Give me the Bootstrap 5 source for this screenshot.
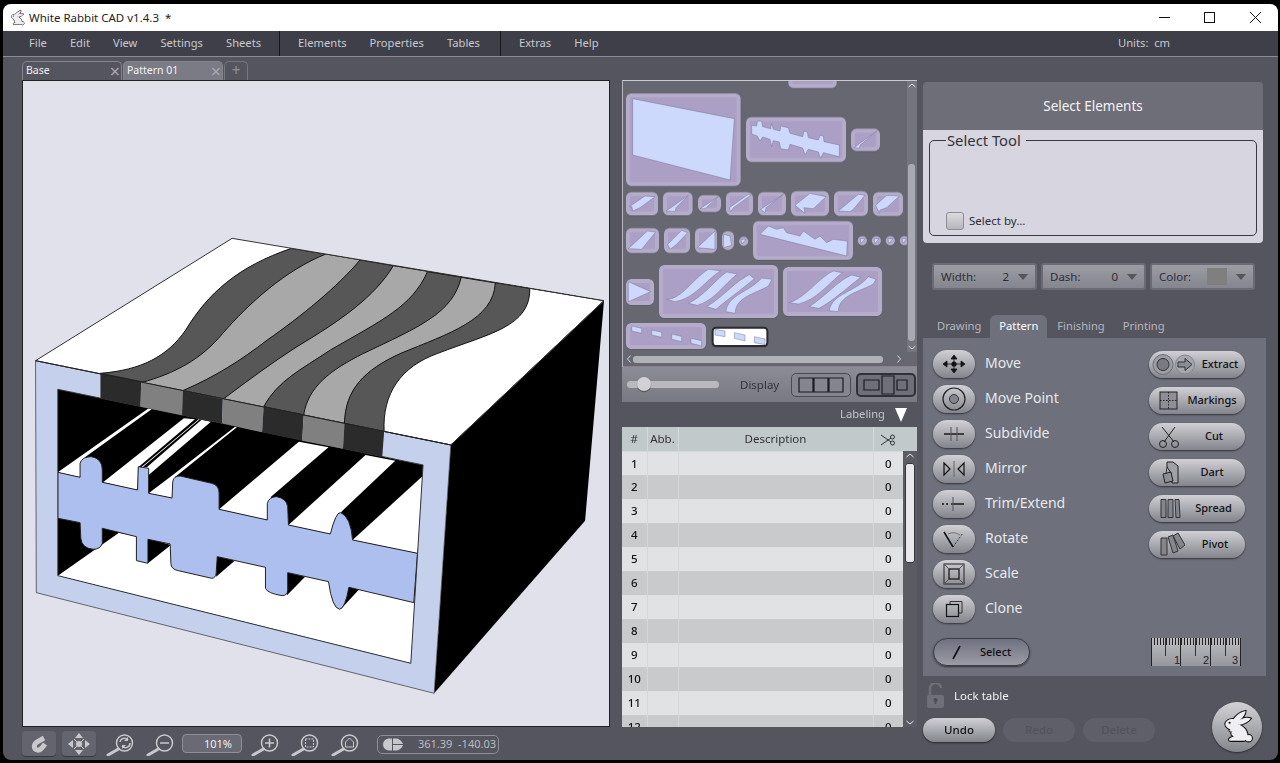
<!DOCTYPE html>
<html lang="en">
<head>
<meta charset="UTF-8" />
<title>White Rabbit CAD</title>
<link rel="stylesheet" href="https://cdn.jsdelivr.net/npm/bootstrap@5.3.3/dist/css/bootstrap.min.css" />
<script src="https://cdn.jsdelivr.net/npm/bootstrap@5.3.3/dist/js/bootstrap.bundle.min.js"></script>
<style>
html, body { height: 763px; overflow: hidden; background: #000; }
body { font-family: "Noto Sans", "Open Sans", sans-serif; font-size: 12px; }
.rb-window { height: 763px; padding: 4px 2px 3px 3px; }
.rb-inner { height: 756px; background: #55555f; border-radius: 8px 8px 8px 8px; overflow: hidden; }
.rb-title { height: 27px; background: #fff; color: #222; font-size: 11.5px; padding-left: 6px; }
.rb-winbtn { width: 45.5px; height: 27px; }
.rb-menu { height: 26px; background: #3f3f49; border-bottom: 1px solid #8b8b93; color: #c9c9cf; font-size: 11.2px; padding-left: 26px; }
.rb-menu span { margin-right: 23px; }
.rb-menu span.rb-end1 { margin-right: 18px; }
.rb-menu span.rb-end2 { margin-right: 20px; }
.rb-sep { width: 1px; height: 25px; background: #15151a; margin-right: 18px; }
.rb-units { position: absolute; left: 1115px; }
.rb-main { height: 703px; padding-left: 19px; }
.rb-left { width: 588px; }
.rb-doc-tabs { height: 23px; padding-top: 4px; }
.rb-doc-tab { width: 100px; height: 19px; margin-right: 1px; border: 1px solid #85858d; border-bottom: 0; border-radius: 5px 5px 0 0; background: #55555f; color: #f2f2f4; font-size: 10.5px; padding: 0 1px 0 3px; }
.rb-doc-tab.rb-on { background: #7b7b85; }
.rb-doc-tab b { font-weight: 400; font-size: 18px; color: #a9a9b0; line-height: 1; }
.rb-doc-plus { width: 24px; height: 19px; border: 1px solid #77777f; border-bottom: 0; border-radius: 5px 5px 0 0; color: #8f8f97; font-size: 16px; line-height: 16px; }
.rb-canvas { width: 588px; height: 647px; background: #e0e1ea; border: 1px solid #222; display: block; }
.rb-bottom { height: 33px; padding-top: 4px; }
.rb-square { width: 34px; height: 25px; background: #64646e; border-radius: 4px; box-shadow: 0 1px 1px rgba(0,0,0,.35); }
.rb-m2 { margin-left: 6px; }
.rb-mag { width: 28px; height: 25px; }
.rb-m3 { margin-left: 10px; }
.rb-m4 { margin-left: 12px; }
.rb-zoom { width: 60px; height: 19px; margin: 3px 0 0 8px; border: 1px solid #8e8e96; border-radius: 4px; background: #6a6a74; color: #f0f0f2; font-size: 11px; line-height: 17px; text-align: right; padding-right: 9px; }
.rb-m5 { margin-left: 9px; }
.rb-m6 { margin-left: 12px; }
.rb-coord { width: 122px; height: 19px; margin: 4px 0 0 18px; border: 1px solid #8e8e96; border-radius: 5px; color: #bcbcc2; font-size: 11px; padding: 0 2px 0 4px; }
.rb-mid { width: 295px; margin: 23px 0 0 12px; }
.rb-thumbs { height: 287px; background: #676771; border-top: 1px solid #c9c9cf; border-left: 1px solid #b5b5bb; }
.rb-view { width: 284px; height: 271px; display: block; }
.rb-vbar { width: 10px; background: #74747e; }
.rb-vthumb { width: 7px; height: 177px; margin: 75px 0 3px 1px; background: #a9a9b1; border-radius: 3px; }
.rb-hbar { height: 15px; border-bottom: 1px solid #8d7f8c; padding: 0 3px; }
.rb-hthumb { width: 250px; height: 7px; margin: 0 13px 0 1px; background: #b1b1b8; border-radius: 3px; }
.rb-display { height: 35px; background: linear-gradient(#8c8c96, #797983); color: #33333a; font-size: 11.5px; padding-left: 5px; }
.rb-track { width: 92px; height: 7px; background: #b9b9bf; border-radius: 4px; position: relative; flex-shrink: 0; }
.rb-knob { position: absolute; left: 10px; top: -4px; width: 14px; height: 14px; border-radius: 50%; background: #d2d2d6; box-shadow: 0 1px 1px rgba(0,0,0,.4); }
.rb-dlabel { margin-left: 21px; margin-right: 12px; width: 39px; white-space: nowrap; }
.rb-disp { width: 60px; height: 24px; border: 1px solid #4a4a54; border-radius: 5px; background: #85858f; flex-shrink: 0; }
.rb-disp.rb-on { border: 2px solid #30303a; background: #6f6f79; margin-left: 5px; }
.rb-label { height: 25px; background: #55555f; color: #c4c4ca; font-size: 11.2px; padding-right: 10px; }
.rb-tri { width: 0; height: 0; margin-left: 10px; border-left: 6px solid transparent; border-right: 6px solid transparent; border-top: 14px solid #fff; }
.rb-tablewrap { height: 300px; overflow: hidden; }
.rb-table { width: 281px; table-layout: fixed; margin: 0; font-size: 11.5px; font-weight: 500; color: #111; }
.rb-table th, .rb-table td { padding: 0; text-align: center; vertical-align: middle; border: 0; border-left: 1px solid #d5d7d9; }
.rb-table th:first-child, .rb-table td:first-child { border-left: 0; }
.rb-table th { height: 24px; background: #c1c9cb; font-weight: 400; color: #333; border-bottom: 1px solid #d5d7d9; }
.rb-table td { height: 24px; }
.rb-table tbody tr:nth-child(odd) td { background: #e0e2e4; }
.rb-table tbody tr:nth-child(even) td { background: #c9cacc; }
.rb-tbar { width: 14px; background: #5b5b65; }
.rb-thead { height: 24px; background: #c1c9cb; }
.rb-tthumb { width: 10px; height: 100px; margin: 4px 0 0 2px; background: #e8e8ea; border: 1px solid #35353d; border-radius: 3px; }
.rb-right { width: 343px; margin-left: 6px; padding-top: 25px; }
.rb-rhead { width: 340px; height: 48px; background: #6e6e79; border-radius: 4px 4px 0 0; color: #f4f4f6; font-size: 13.5px; }
.rb-rbody { width: 340px; height: 113px; background: #d7d5df; border-radius: 0 0 4px 4px; padding: 1px 6px 0; }
.rb-field { height: 103px; border: 1px solid #3a3a44; border-radius: 5px; padding: 0 0 0 16px; margin: 0; position: relative; top: 2px; }
.rb-field legend { float: none; width: auto; font-size: 14.8px; line-height: 14px; margin: 0; padding: 0 5px 0 1px; color: #33333b; }
.rb-check { width: 18px; height: 18px; border: 1px solid #8c8c94; border-radius: 3px; background: linear-gradient(#dcdce0, #b5b5bc); }
.rb-selby { margin-top: 65px; color: #2c2c34; font-size: 11.5px; gap: 5px; }
.rb-drops { height: 27px; margin: 20px 0 0 9px; gap: 4px; }
.rb-drop { width: 105px; height: 27px; border: 2px solid #6b6b75; border-radius: 3px; background: linear-gradient(#9c9ca5, #85858f); color: #2e2e36; font-size: 11.5px; padding: 0 7px; }
.rb-caret { width: 0; height: 0; border-left: 5px solid transparent; border-right: 5px solid transparent; border-top: 6px solid #55555d; margin-left: 9px; }
.rb-swatch { width: 20px; height: 17px; background: #7f7f7f; margin-left: auto; }
.rb-tabs { height: 23px; margin-top: 25px; padding-left: 14px; color: #b6b6bd; font-size: 11.2px; }
.rb-tabs span { margin-right: 18px; line-height: 21px; }
.rb-tabs .rb-on { background: #6e707b; color: #fff; border-radius: 6px 6px 0 0; margin: 0 10px 0 -9px; padding: 0 9px; line-height: 21px; height: 23px; }
.rb-panel { height: 338px; background: #6e707b; padding: 12px 21px 10px 10px; }
.rb-leftcol { gap: 7px; }
.rb-rightcol { gap: 9px; margin-top: 1px; }
.rb-tool { height: 28px; gap: 10px; color: #e8e8ee; font-size: 14px; }
.rb-tool span { position: relative; top: -2px; }
.rb-pill { border: 0; padding: 0; background: linear-gradient(#d0d0d5, #84848d); box-shadow: 0 1px 2px rgba(0,0,0,.55); border-radius: 14px; color: #111; font-size: 11px; font-weight: 500; }
.rb-pill:hover { background: linear-gradient(#d0d0d5, #84848d); color: #111; }
.rb-toolpill { width: 42px; height: 28px; }
.rb-select { width: 97px; height: 28px; margin-top: 8px; background: linear-gradient(#6f7180, #9b9ca6); border: 1px solid #3d3d47; }
.rb-wide { width: 96px; height: 27px; }
.rb-wide span { flex-grow: 1; text-align: center; }
.rb-ruler { display: block; margin-right: 4px; }
.rb-foot { height: 84px; }
.rb-lock { height: 26px; margin: 7px 0 9px 3px; color: #f2f2f4; font-size: 11.5px; gap: 8px; }
.rb-act { width: 72px; height: 24px; margin-right: 8px; padding: 0; font-size: 11.5px; font-weight: 500; border-radius: 12px; border: 0; }
.rb-act.rb-off { background: #666670; color: #52525c; box-shadow: none; }
.rb-bunny { width: 50px; height: 50px; border-radius: 50%; margin: 26px 4px 0 0; background: linear-gradient(#d2d2d6, #85858e); box-shadow: 0 1px 2px rgba(0,0,0,.5); }
.rb-tile { fill: #ab9fc6; stroke: #b5accb; stroke-width: 12; }
.rb-piece { fill: #ccd8fc; stroke: #7a7794; stroke-width: 1.5; }
.rb-thumbset { filter: drop-shadow(0 1px 1px rgba(30,30,40,.35)); }
</style>
</head>
<body>
<div class="rb-window">
<div class="rb-inner position-relative">

  <div class="rb-title d-flex align-items-center">
    <svg width="16" height="20" viewBox="0 0 32 32" class="me-1"><use href="#rabbit" /></svg>
    <span>White Rabbit CAD v1.4.3 &nbsp;*</span>
    <div class="ms-auto d-flex">
      <div class="rb-winbtn d-flex align-items-center justify-content-center"><svg width="11" height="11"><path d="M0 5.5H11" stroke="#111" /></svg></div>
      <div class="rb-winbtn d-flex align-items-center justify-content-center"><svg width="11" height="11"><rect x=".5" y=".5" width="10" height="10" fill="none" stroke="#111" /></svg></div>
      <div class="rb-winbtn d-flex align-items-center justify-content-center"><svg width="11" height="11"><path d="M0 0L11 11M11 0L0 11" stroke="#111" /></svg></div>
    </div>
  </div>

  <div class="rb-menu d-flex align-items-center position-relative">
    <span>File</span><span>Edit</span><span>View</span><span>Settings</span><span class="rb-end1">Sheets</span>
    <div class="rb-sep"></div>
    <span>Elements</span><span>Properties</span><span class="rb-end2">Tables</span>
    <div class="rb-sep"></div>
    <span>Extras</span><span>Help</span>
    <span class="rb-units">Units: &nbsp;cm</span>
  </div>

  <div class="rb-main d-flex">
    <div class="rb-left">
      <div class="rb-doc-tabs d-flex">
        <div class="rb-doc-tab d-flex align-items-center justify-content-between"><span>Base</span><b>&#215;</b></div>
        <div class="rb-doc-tab rb-on d-flex align-items-center justify-content-between"><span>Pattern 01</span><b>&#215;</b></div>
        <div class="rb-doc-plus text-center">+</div>
      </div>

      <svg class="rb-canvas" viewBox="23 81 586 645">
        <defs>
          <clipPath id="topface"><path d="M545,25L1548,212L1135,645L15,392Z" /></clipPath>
          <clipPath id="hole"><path d="M75,478L1060,705L1027,1300L75,1037Z" /></clipPath>
        </defs>
        <g transform="translate(30 230) scale(.3708 .3333)">
          <path d="M1135,645L1548,212L1497,872L1090,1390Z" fill="#000" />
          <path d="M15,392L1135,645L1090,1390L17,1088Z" fill="#c5d0ec" stroke="#333" stroke-width="2" />
          <g clip-path="url(#hole)">
            <path d="M75,478L1060,705L1027,1300L75,1037Z" fill="#000" />
            <path d="M75,1037L240,908L1045,1100L1027,1300Z" fill="#fff" />
            <path d="M318,1000L380,945L318,925ZM502,1040L552,992L502,975ZM693,1096L742,1040L693,1025ZM838,1138L888,1078L858,1068Z" fill="#000" />
            <path d="M75,727L320,535L328,538L150,680L135,742Z" fill="#fff" />
            <path d="M197,757L415,565L445,568L292,712L290,780Z" fill="#fff" />
            <path d="M300,712L455,568L488,575L320,735Z" fill="#fff" />
            <path d="M305,710L458,568L462,570L315,712Z" fill="#000" />
            <path d="M320,790L385,735L553,590L558,592L392,740L383,804Z" fill="#fff" />
            <path d="M510,838L725,635L805,652L650,800L640,870Z" fill="#fff" />
            <path d="M697,885L905,675L985,692L840,845L810,912Z" fill="#fff" />
            <path d="M870,930L1062,735L1045,970Z" fill="#fff" />
            <path d="M75,727L135,742L135,700Q140,680 165,680Q195,685 195,720L195,757L290,780L292,710L320,715L320,790L383,804L385,755Q387,738 405,738L490,760Q510,765 510,790L510,838L640,870L640,820Q645,800 665,800Q692,805 695,830L697,885L810,912Q825,845 838,848Q865,860 870,930L1045,970L1035,1118L860,1072Q850,1135 835,1138Q815,1135 805,1055L695,1028L695,1080Q695,1097 680,1097Q640,1090 635,1075L635,1012L505,980L502,1030Q500,1045 490,1045L400,1022Q380,1018 380,1000L378,942L318,928L318,1000L287,992L287,920L195,895L195,940Q190,958 170,958Q140,955 137,925L135,878L75,865Z" fill="#adbfee" stroke="#222" stroke-width="1" vector-effect="non-scaling-stroke" />
          </g>
          <path d="M75,478L1060,705L1027,1300L75,1037Z" fill="none" stroke="#333" stroke-width="1" vector-effect="non-scaling-stroke" />
          <path d="M545,25L1548,212L1135,645L15,392Z" fill="#fff" />
          <g clip-path="url(#topface)" stroke="#111" stroke-width="1">
            <path vector-effect="non-scaling-stroke" fill="#575757" d="M190,430C300,420 370,380 420,300C480,190 560,110 705,55L1548,212L1135,645Z" />
            <path vector-effect="non-scaling-stroke" fill="#a8a8a8" d="M300,458C390,430 460,390 520,310C590,220 690,120 798,72L1548,212L1135,645Z" />
            <path vector-effect="non-scaling-stroke" fill="#575757" d="M412,482C500,440 570,390 640,330C730,260 830,170 890,90L1548,212L1135,645Z" />
            <path vector-effect="non-scaling-stroke" fill="#a8a8a8" d="M520,508C590,450 650,400 720,350C840,270 930,200 980,107L1548,212L1135,645Z" />
            <path vector-effect="non-scaling-stroke" fill="#575757" d="M630,530C670,450 730,420 810,360C950,270 1030,230 1072,125L1548,212L1135,645Z" />
            <path vector-effect="non-scaling-stroke" fill="#a8a8a8" d="M738,555C750,470 810,420 900,370C1050,290 1140,250 1163,142L1548,212L1135,645Z" />
            <path vector-effect="non-scaling-stroke" fill="#575757" d="M848,580C850,480 900,420 1000,370C1130,310 1250,270 1255,158L1548,212L1135,645Z" />
            <path vector-effect="non-scaling-stroke" fill="#fff" d="M955,605C950,490 1000,410 1100,370C1240,310 1350,290 1348,175L1548,212L1135,645Z" />
          </g>
          <path d="M545,25L1548,212L1135,645L15,392Z" fill="none" stroke="#333" stroke-width="1" vector-effect="non-scaling-stroke" />
          <path d="M190,430L300,456L298,530L190,505Z" fill="#2b2b2b" />
          <path d="M300,456L412,482L410,556L298,530Z" fill="#808080" />
          <path d="M412,482L520,508L518,580L410,556Z" fill="#2b2b2b" />
          <path d="M520,508L630,532L626,607L518,580Z" fill="#808080" />
          <path d="M630,532L738,556L734,632L626,607Z" fill="#2b2b2b" />
          <path d="M738,556L848,580L844,656L734,632Z" fill="#808080" />
          <path d="M848,580L955,605L950,680L844,656Z" fill="#2b2b2b" />
          <path d="M15,392L1135,645" fill="none" stroke="#222" stroke-width="1" vector-effect="non-scaling-stroke" />
        </g>
      </svg>

      <div class="rb-bottom d-flex">
        <div class="rb-square d-flex align-items-center justify-content-center">
          <svg width="24" height="22" viewBox="0 0 24 22"><path d="M17 5L10 9C6 12 7 16 10 17C13 18 15 15 18 11" fill="none" stroke="#c9c9cd" stroke-width="5" /></svg>
        </div>
        <div class="rb-square rb-m2 d-flex align-items-center justify-content-center">
          <svg width="24" height="24" viewBox="0 0 24 24" fill="#c9c9cd"><circle cx="12" cy="12" r="3" /><path d="M12 1L16 6H8ZM12 23L16 18H8ZM1 12L6 8V16ZM23 12L18 8V16Z" /><path d="M12 12L7 7M12 12L17 7M12 12L7 17M12 12L17 17" stroke="#c9c9cd" stroke-width="1" /></svg>
        </div>
        <svg class="rb-mag rb-m3" viewBox="0 0 28 25"><use href="#mag" /><path d="M14 11A4.5 4.5 0 0 1 22 9M24 12A4.5 4.5 0 0 1 16 15" fill="none" stroke="#c8c8cc" stroke-width="1.5" /><path d="M22 6V10H18ZM16 18V14H20Z" fill="#c8c8cc" /></svg>
        <svg class="rb-mag rb-m4" viewBox="0 0 28 25"><use href="#mag" /><path d="M14 12H23" stroke="#c8c8cc" stroke-width="1.6" /></svg>
        <div class="rb-zoom">101%</div>
        <svg class="rb-mag rb-m5" viewBox="0 0 28 25"><use href="#mag" /><path d="M14 12H23M18.5 7.5V16.5" stroke="#c8c8cc" stroke-width="1.6" /></svg>
        <svg class="rb-mag rb-m6" viewBox="0 0 28 25"><use href="#mag" /><rect x="14.5" y="8" width="8" height="8" fill="none" stroke="#c8c8cc" stroke-dasharray="2 1" /></svg>
        <svg class="rb-mag rb-m6" viewBox="0 0 28 25"><use href="#mag" /><path d="M14.5 16V11L18.5 7L22.5 11V16Z" fill="none" stroke="#c8c8cc" /></svg>
        <div class="rb-coord d-flex align-items-center justify-content-between">
          <svg width="22" height="13" viewBox="0 0 22 13"><path d="M10 0.5H7A6 6 0 0 0 7 12.5H10Z" fill="#c8c8cc" /><path d="M11 0.5H14C17 0.5 20 3 21 6H11ZM11 7H21C20 10 17 12.5 14 12.5H11Z" fill="#c8c8cc" /></svg>
          <span>361.39 &nbsp;-140.03</span>
        </div>
      </div>
    </div>

    <div class="rb-mid">
      <div class="rb-thumbs d-flex flex-column">
        <div class="d-flex">
          <svg class="rb-view" viewBox="9 15 852 813">
            <g class="rb-thumbset">
              <rect class="rb-tile" x="511" y="-20" width="133" height="50" rx="8" />
              <rect class="rb-tile" x="24" y="58" width="332" height="266" rx="10" />
              <rect class="rb-tile" x="384" y="129" width="288" height="123" rx="10" />
              <rect class="rb-tile" x="699" y="164" width="75" height="55" rx="10" />
              <rect class="rb-tile" x="24" y="354" width="84" height="58" rx="10" />
              <rect class="rb-tile" x="135" y="354" width="77" height="58" rx="10" />
              <rect class="rb-tile" x="240" y="363" width="57" height="39" rx="10" />
              <rect class="rb-tile" x="324" y="354" width="69" height="58" rx="10" />
              <rect class="rb-tile" x="420" y="354" width="72" height="58" rx="10" />
              <rect class="rb-tile" x="519" y="351" width="102" height="63" rx="10" />
              <rect class="rb-tile" x="648" y="351" width="90" height="63" rx="10" />
              <rect class="rb-tile" x="765" y="354" width="78" height="60" rx="10" />
              <rect class="rb-tile" x="24" y="462" width="87" height="63" rx="10" />
              <rect class="rb-tile" x="138" y="462" width="66" height="63" rx="10" />
              <rect class="rb-tile" x="231" y="462" width="54" height="63" rx="10" />
              <rect class="rb-tile" x="312" y="471" width="24" height="45" rx="10" />
              <rect class="rb-tile" x="405" y="441" width="288" height="105" rx="10" />
              <circle class="rb-tile" cx="371" cy="496" r="8" />
              <circle class="rb-tile" cx="727" cy="494" r="8" />
              <circle class="rb-tile" cx="769" cy="494" r="8" />
              <circle class="rb-tile" cx="811" cy="494" r="8" />
              <circle class="rb-tile" cx="853" cy="494" r="8" />
              <g transform="translate(0 552)">
                <rect class="rb-tile" x="24" y="63" width="72" height="66" rx="10" />
                <rect class="rb-tile" x="123" y="21" width="345" height="147" rx="10" />
                <rect class="rb-tile" x="495" y="27" width="285" height="135" rx="10" />
                <rect class="rb-tile" x="24" y="195" width="228" height="66" rx="10" />
                <rect x="278" y="203" width="164" height="55" rx="10" fill="#fff" stroke="#2a2a32" stroke-width="6" />
              </g>
            </g>
            <path class="rb-piece" d="M38,68L343,128L330,312L38,237Z" />
            <path class="rb-piece" d="M395,148L410,150L412,135L425,135L428,152L452,158L455,142L460,160L480,165L482,150L505,155L510,172L548,182L552,165L562,168L565,185L595,192L600,178L610,180L612,197L658,207L658,242L610,230L602,247L595,228L565,220L555,236L548,216L510,205L505,222L482,218L478,198L460,194L455,212L450,190L428,183L420,195L412,180L395,174Z" />
            <path class="rb-piece" d="M703,215L718,203L770,165L720,208L718,217Z" />
            <path class="rb-piece" d="M28,392L75,360L105,362L60,395L38,405L36,392Z" />
            <path class="rb-piece" d="M138,405L160,390L205,358L168,395L165,407Z" />
            <path class="rb-piece" d="M240,398L295,362L255,398Z" />
            <path class="rb-piece" d="M328,395L385,355L392,358L340,395L332,408Z" />
            <path class="rb-piece" d="M422,400L490,355L438,395L435,410Z" />
            <path class="rb-piece" d="M525,388L570,352L618,362L580,398L552,395L555,412Z" />
            <path class="rb-piece" d="M655,405L715,355L735,358L700,400L690,407Z" />
            <path class="rb-piece" d="M767,388L800,358L838,360L800,395L780,402L778,412Z" />
            <path class="rb-piece" d="M25,518L82,465L107,468L65,520Z" />
            <path class="rb-piece" d="M143,505L185,463L203,470L170,505L150,520Z" />
            <path class="rb-piece" d="M232,515L285,465L285,520Z" />
            <path class="rb-piece" d="M311,475L330,480L335,508L310,515Z" />
            <path class="rb-piece" d="M420,475L445,450L470,460L490,455L500,470L540,480L550,465L585,490L600,480L620,500L640,490L682,495L680,540Z" />
            <path class="rb-piece" d="M363,490L378,490L366,504ZM720,488L735,488L723,502ZM762,488L777,488L765,502ZM804,488L819,488L807,502ZM846,488L860,488L849,502Z" />
            <g transform="translate(0 552)">
              <path class="rb-piece" d="M25,65L92,95L25,125Z" />
              <path class="rb-piece" d="M140,118C185,118 215,60 265,28L302,32C255,62 225,115 165,125Z" />
              <path class="rb-piece" d="M205,130C250,110 285,60 320,36L352,42C310,75 285,120 232,136Z" />
              <path class="rb-piece" d="M260,140C310,110 345,65 388,44L403,56C370,85 320,120 288,148Z" />
              <path class="rb-piece" d="M318,155C322,105 390,95 425,54L456,58L445,78C410,100 345,110 346,160Z" />
              <path class="rb-piece" d="M508,128C555,115 600,50 640,33L667,38C625,70 590,120 535,132Z" />
              <path class="rb-piece" d="M568,140C620,105 660,58 695,45L722,52C680,85 635,125 597,145Z" />
              <path class="rb-piece" d="M628,152C635,100 710,95 745,50L768,58L760,72C720,95 655,105 655,155Z" />
              <path class="rb-piece" d="M35,198L65,205L65,220L35,213ZM95,210L125,217L125,232L95,225ZM155,222L185,229L185,245L155,238ZM213,235L245,242L245,258L213,250Z" />
              <path class="rb-piece" d="M285,208L315,213L315,230L285,225ZM343,218L375,225L375,243L343,235ZM403,230L435,237L435,254L403,248Z" />
            </g>
          </svg>
          <div class="rb-vbar">
            <svg width="10" height="8" class="d-block"><path d="M1.5 6L5 3L8.5 6" fill="none" stroke="#e4e4e8" /></svg>
            <div class="rb-vthumb"></div>
            <svg width="10" height="8" class="d-block"><path d="M1.5 2L5 5L8.5 2" fill="none" stroke="#d4d4d8" /></svg>
          </div>
        </div>
        <div class="rb-hbar d-flex align-items-center">
          <svg width="6" height="10"><path d="M4.5 1.5L1.5 5L4.5 8.5" fill="none" stroke="#d4d4d8" /></svg>
          <div class="rb-hthumb"></div>
          <svg width="6" height="10"><path d="M1.5 1.5L4.5 5L1.5 8.5" fill="none" stroke="#d4d4d8" /></svg>
        </div>
      </div>

      <div class="rb-display d-flex align-items-center">
        <div class="rb-track"><div class="rb-knob"></div></div>
        <span class="rb-dlabel">Display</span>
        <div class="rb-disp d-flex align-items-center justify-content-center">
          <svg width="46" height="16"><path d="M1 1H15V15H1ZM16 1H30V15H16ZM31 1H45V15H31Z" fill="none" stroke="#1c1c22" stroke-width="1.2" /></svg>
        </div>
        <div class="rb-disp rb-on d-flex align-items-center justify-content-center">
          <svg width="46" height="20"><path d="M1 6H16V16H1ZM19 2H31V20H19ZM34 6H44V16H34Z" transform="translate(0 -1)" fill="none" stroke="#1c1c22" stroke-width="1.2" /></svg>
        </div>
      </div>

      <div class="rb-label d-flex align-items-center justify-content-end">
        <span>Labeling</span><div class="rb-tri"></div>
      </div>

      <div class="rb-tablewrap d-flex">
        <table class="table rb-table">
          <colgroup><col style="width:25px" /><col style="width:31px" /><col /><col style="width:30px" /></colgroup>
          <thead><tr><th>#</th><th>Abb.</th><th>Description</th><th><svg width="14" height="12" viewBox="0 0 14 12"><path d="M0 1L10 8M0 11L10 4" stroke="#333" fill="none" /><circle cx="11.5" cy="9" r="2" fill="none" stroke="#333" /><circle cx="11.5" cy="3" r="2" fill="none" stroke="#333" /></svg></th></tr></thead>
          <tbody>
            <tr><td>1</td><td></td><td></td><td>0</td></tr>
            <tr><td>2</td><td></td><td></td><td>0</td></tr>
            <tr><td>3</td><td></td><td></td><td>0</td></tr>
            <tr><td>4</td><td></td><td></td><td>0</td></tr>
            <tr><td>5</td><td></td><td></td><td>0</td></tr>
            <tr><td>6</td><td></td><td></td><td>0</td></tr>
            <tr><td>7</td><td></td><td></td><td>0</td></tr>
            <tr><td>8</td><td></td><td></td><td>0</td></tr>
            <tr><td>9</td><td></td><td></td><td>0</td></tr>
            <tr><td>10</td><td></td><td></td><td>0</td></tr>
            <tr><td>11</td><td></td><td></td><td>0</td></tr>
            <tr><td>12</td><td></td><td></td><td>0</td></tr>
          </tbody>
        </table>
        <div class="rb-tbar d-flex flex-column">
          <div class="rb-thead"></div>
          <svg width="14" height="8" class="d-block"><path d="M3.5 6L7 3L10.5 6" fill="none" stroke="#e4e4e8" /></svg>
          <div class="rb-tthumb"></div>
          <svg width="14" height="8" class="d-block mt-auto"><path d="M3.5 2L7 5L10.5 2" fill="none" stroke="#e4e4e8" /></svg>
        </div>
      </div>
    </div>

    <div class="rb-right">
      <div class="rb-rhead d-flex align-items-center justify-content-center">Select Elements</div>
      <div class="rb-rbody">
        <fieldset class="rb-field">
          <legend>Select Tool</legend>
          <div class="rb-selby d-flex align-items-center"><div class="rb-check"></div><span>Select by...</span></div>
        </fieldset>
      </div>

      <div class="rb-drops d-flex">
        <div class="rb-drop d-flex align-items-center"><span>Width:</span><span class="ms-auto">2</span><div class="rb-caret"></div></div>
        <div class="rb-drop d-flex align-items-center"><span>Dash:</span><span class="ms-auto">0</span><div class="rb-caret"></div></div>
        <div class="rb-drop d-flex align-items-center"><span>Color:</span><div class="rb-swatch"></div><div class="rb-caret"></div></div>
      </div>

      <div class="rb-tabs d-flex">
        <span>Drawing</span><span class="rb-on">Pattern</span><span>Finishing</span><span>Printing</span>
      </div>

      <div class="rb-panel d-flex justify-content-between">
        <div class="d-flex flex-column rb-leftcol">
          <div class="rb-tool d-flex align-items-center">
            <button type="button" class="btn rb-pill rb-toolpill"><svg width="42" height="28"><circle cx="21" cy="14" r="2.6" fill="#111" /><path d="M21 5L24 9H18ZM21 23L24 19H18ZM10 14L14 11V17ZM32 14L28 11V17ZM14 14H28M21 9V19" fill="#111" stroke="#111" stroke-width=".8" /></svg></button>
            <span>Move</span>
          </div>
          <div class="rb-tool d-flex align-items-center">
            <button type="button" class="btn rb-pill rb-toolpill"><svg width="42" height="28"><circle cx="21" cy="14" r="11" fill="none" stroke="#222" stroke-width="1.2" /><circle cx="21" cy="14" r="4.5" fill="#85858d" stroke="#333" /></svg></button>
            <span>Move Point</span>
          </div>
          <div class="rb-tool d-flex align-items-center">
            <button type="button" class="btn rb-pill rb-toolpill"><svg width="42" height="28"><path d="M11 14H31" stroke="#111" stroke-width="1.4" /><path d="M18 7V21M24 7V21" stroke="#555" /></svg></button>
            <span>Subdivide</span>
          </div>
          <div class="rb-tool d-flex align-items-center">
            <button type="button" class="btn rb-pill rb-toolpill"><svg width="42" height="28"><path d="M11 8L17 14L11 20ZM31 8L25 14L31 20Z" fill="none" stroke="#111" stroke-width="1.2" /><path d="M21 6V22" stroke="#666" /></svg></button>
            <span>Mirror</span>
          </div>
          <div class="rb-tool d-flex align-items-center">
            <button type="button" class="btn rb-pill rb-toolpill"><svg width="42" height="28"><path d="M9 14H11M13 14H15" stroke="#111" stroke-width="1.4" /><path d="M18 14H31" stroke="#111" stroke-width="1.4" /><path d="M20 7V21" stroke="#555" /></svg></button>
            <span>Trim/Extend</span>
          </div>
          <div class="rb-tool d-flex align-items-center">
            <button type="button" class="btn rb-pill rb-toolpill"><svg width="42" height="28"><path d="M11 7L20 22" stroke="#111" stroke-width="1.5" /><path d="M20 22L30 8" stroke="#333" stroke-dasharray="2 1.5" /><path d="M15 9Q21 6 27 10" fill="none" stroke="#777" /></svg></button>
            <span>Rotate</span>
          </div>
          <div class="rb-tool d-flex align-items-center">
            <button type="button" class="btn rb-pill rb-toolpill"><svg width="42" height="28"><rect x="11" y="4" width="20" height="20" fill="none" stroke="#222" /><rect x="16" y="9" width="10" height="10" fill="none" stroke="#111" stroke-width="1.2" /><path d="M11 4L16 9M31 4L26 9M11 24L16 19M31 24L26 19" stroke="#555" /></svg></button>
            <span>Scale</span>
          </div>
          <div class="rb-tool d-flex align-items-center">
            <button type="button" class="btn rb-pill rb-toolpill"><svg width="42" height="28"><path d="M17 9V6.500H29V18H25" fill="none" stroke="#333" /><rect x="13.500" y="9.500" width="12" height="12" fill="none" stroke="#111" stroke-width="1.2" /></svg></button>
            <span>Clone</span>
          </div>
          <button type="button" class="btn rb-pill rb-select d-flex align-items-center">
            <svg width="38" height="26"><path d="M19 20L26 7" stroke="#111" stroke-width="1.6" /></svg>
            <span class="ms-2">Select</span>
          </button>
        </div>
        <div class="d-flex flex-column align-items-end">
          <div class="d-flex flex-column rb-rightcol">
            <button type="button" class="btn rb-pill rb-wide d-flex align-items-center"><svg width="46" height="27"><circle cx="14" cy="13.500" r="10" fill="#9c9ca4" stroke="#6f6f77" /><circle cx="14" cy="13.500" r="6" fill="#7a7a82" stroke="#333" /><circle cx="36" cy="13.500" r="9.500" fill="#a6a6ae" stroke="#85858d" /><path d="M29 11H36V7.500L43 13.500L36 19.500V16H29Z" fill="#8c8c94" stroke="#333" /></svg><span>Extract</span></button>
            <button type="button" class="btn rb-pill rb-wide d-flex align-items-center"><svg width="30" height="27"><rect x="11" y="5" width="17" height="17" fill="#8e8e96" stroke="#222" /><path d="M19.500 5V22M11 13.500H28" stroke="#222" stroke-dasharray="1.500 1.500" /></svg><span>Markings</span></button>
            <button type="button" class="btn rb-pill rb-wide d-flex align-items-center"><svg width="34" height="27"><path d="M13 4L25 19M26 4L15 19" stroke="#222" fill="none" /><circle cx="14" cy="21" r="3.500" fill="none" stroke="#222" /><circle cx="26" cy="21" r="3.500" fill="none" stroke="#222" /></svg><span>Cut</span></button>
            <button type="button" class="btn rb-pill rb-wide d-flex align-items-center"><svg width="30" height="27"><path d="M18 3L24 3L29 7V24H23L22 14L18 8Z" fill="#a0a0a8" stroke="#222" /><path d="M14 15L22 13L24 22L16 24Z" fill="#8e8e96" stroke="#222" /><path d="M18 8L17 15" stroke="#333" /></svg><span>Dart</span></button>
            <button type="button" class="btn rb-pill rb-wide d-flex align-items-center"><svg width="33" height="27"><path d="M12 4.500H17V22.500H12ZM19 4.500H24V22.500H19ZM26 4.500H30L31 22.500H27Z" fill="#85858d" stroke="#333" /></svg><span>Spread</span></button>
            <button type="button" class="btn rb-pill rb-wide d-flex align-items-center"><svg width="36" height="27"><path d="M12 7H18V24H12ZM19 6L24 4L29 20L24 22ZM24 5L29 2L36 14L31 18Z" fill="#85858d" stroke="#333" /></svg><span>Pivot</span></button>
          </div>
          <svg class="rb-ruler mt-auto" width="90" height="28" viewBox="0 0 90 28">
            <defs>
              <linearGradient id="rulerfill" x1="0" y1="0" x2="0" y2="1"><stop offset="0" stop-color="#bcbcc2" /><stop offset="1" stop-color="#96969e" /></linearGradient>
              <pattern id="ticks" width="3" height="28" patternUnits="userSpaceOnUse"><path d="M.5 0V7" stroke="#222" /></pattern>
            </defs>
            <rect width="90" height="28" fill="url(#rulerfill)" />
            <rect width="90" height="8" fill="url(#ticks)" />
            <path d="M.5 0V28M29.500 0V28M59.500 0V28M89.500 0V28" stroke="#222" />
            <path d="M14.500 0V18M44.500 0V18M74.500 0V18" stroke="#333" />
            <text x="23" y="26" font-size="11" fill="#222" font-family="Liberation Sans, sans-serif">1</text>
            <text x="52" y="26" font-size="11" fill="#222" font-family="Liberation Sans, sans-serif">2</text>
            <text x="81" y="26" font-size="11" fill="#222" font-family="Liberation Sans, sans-serif">3</text>
          </svg>
        </div>
      </div>

      <div class="rb-foot d-flex justify-content-between">
        <div>
          <div class="rb-lock d-flex align-items-center">
            <svg width="20" height="26" viewBox="0 0 20 26"><path d="M4 12V6A5.500 5.500 0 0 1 15 5" fill="none" stroke="#6f6f79" stroke-width="2.500" /><rect x="1" y="12" width="17" height="13" rx="2" fill="#6f6f79" /><circle cx="9.500" cy="17" r="2" fill="#4c4c56" /><path d="M9.500 17V21" stroke="#4c4c56" stroke-width="1.500" /></svg>
            <span>Lock table</span>
          </div>
          <div class="d-flex">
            <button type="button" class="btn rb-pill rb-act">Undo</button>
            <button type="button" class="btn rb-pill rb-act rb-off" disabled>Redo</button>
            <button type="button" class="btn rb-pill rb-act rb-off" disabled>Delete</button>
          </div>
        </div>
        <div class="rb-bunny d-flex align-items-center justify-content-center">
          <svg width="34" height="34" viewBox="0 0 32 32"><use href="#rabbit" /></svg>
        </div>
      </div>
    </div>
  </div>
</div>
</div>

<svg width="0" height="0" class="position-absolute">
  <defs>
    <g id="rabbit-shape">
      <path d="M12 10C14 6 19 2 24 1C24 4 21 8 17 11Z" />
      <path d="M15 11C20 8 25 6 29 8C27 11 23 13 18 14Z" />
      <path d="M5 13C6 9 12 7 16 10C18 12 18 15 16 17L12 19C8 18 5 16 5 13Z" />
      <path d="M12 14C17 12 26 16 26 25C26 28 24 29 22 29H10C8 29 8 27 10 26L13 25C10 23 10 21 12 20C9 21 8 19 10 18Z" />
      <circle cx="27" cy="26.500" r="3" />
    </g>
    <symbol id="rabbit" viewBox="0 0 32 32">
      <use href="#rabbit-shape" fill="#111" stroke="#111" stroke-width="2" />
      <use href="#rabbit-shape" fill="#eeeef4" />
      <circle cx="9" cy="12" r="1" fill="#111" />
    </symbol>
    <symbol id="mag" viewBox="0 0 28 25">
      <circle cx="18.500" cy="12" r="8" fill="none" stroke="#c8c8cc" stroke-width="1.500" />
      <path d="M12.500 18L2 24" stroke="#c8c8cc" stroke-width="3" stroke-linecap="round" />
    </symbol>
  </defs>
</svg>
</body>
</html>
